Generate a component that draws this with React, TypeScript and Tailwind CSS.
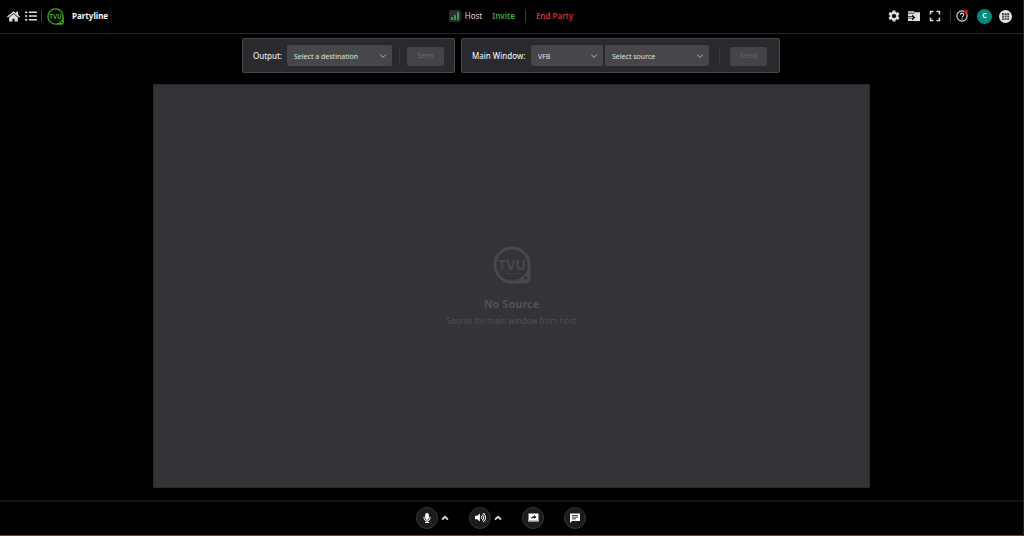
import type { ReactNode } from "react";
import { FaExpand, FaHome, FaListUl, FaMicrophone, FaVolumeUp } from "react-icons/fa";
import { MdSettings } from "react-icons/md";

function TvuLogo({ className, cutout }: { className: string; cutout: string }) {
  return (
    <svg viewBox="0 0 38 38" className={className} role="img" aria-label="TVU networks">
      <path
        d="M19 2a17 17 0 1 0 0 34h14a3 3 0 0 0 3-3V19A17 17 0 0 0 19 2Z"
        fill="none"
        stroke="currentColor"
        strokeWidth="3"
      />
      <path d="M36 19c-1 8-8 15-17 16.500h14a3 3 0 0 0 3-3Z" fill="currentColor" />
      <path d="M31.500 29.500v5l3.500-2.500Z" fill={cutout} />
      <text
        x="19"
        y="24"
        textAnchor="middle"
        fontSize="14"
        fontWeight="700"
        fontFamily="'Open Sans', sans-serif"
        fill="currentColor"
      >
        TVU
      </text>
      <path d="M14 27.500h16" stroke="currentColor" strokeWidth="1.2" strokeDasharray="1.4 .6" opacity=".8" />
    </svg>
  );
}

function Divider({ className }: { className: string }) {
  return <span className={`w-px shrink-0 bg-[#3a3a3e] ${className}`} />;
}

function Dropdown({ label, options, className }: { label: string; options: string[]; className: string }) {
  return (
    <div className={`relative h-[21px] ${className}`}>
      <select
        aria-label={label}
        className="block h-full w-full appearance-none rounded-xs bg-[#46464b] pt-[3px] pr-4 pl-[7px] text-[7px] text-[#e0e0e2]"
      >
        {options.map((option) => (
          <option key={option}>{option}</option>
        ))}
      </select>
      <svg viewBox="0 0 8 8" className="pointer-events-none absolute top-[7px] right-[5px] size-2" fill="none">
        <path d="M1.2 2.6 4 5.4l2.8-2.8" stroke="#b4b4b8" strokeWidth="1" />
      </svg>
    </div>
  );
}

function SendButton() {
  return (
    <button disabled className="mt-[2px] h-[19px] w-[37px] rounded-xs bg-[#434348] text-[7px] text-[#6a6a70]">
      Send
    </button>
  );
}

function RoundButton({ label, children }: { label: string; children: ReactNode }) {
  return (
    <button
      aria-label={label}
      className="flex size-[22px] items-center justify-center rounded-full border border-[#37373a] bg-[#1c1c1d] text-white"
    >
      {children}
    </button>
  );
}

function CaretButton({ label }: { label: string }) {
  return (
    <button aria-label={label} className="text-[#dddddd]">
      <svg viewBox="0 0 8 8" className="size-2" fill="none">
        <path d="M1 5.6 4 2.8l3 2.8" stroke="currentColor" strokeWidth="1.8" />
      </svg>
    </button>
  );
}

function Header() {
  return (
    <header className="grid h-[34px] shrink-0 grid-cols-[1fr_auto_1fr] items-center border-b border-[#29292b] pr-[11px] pb-px pl-[7px]">
      <div className="flex items-center">
        <a href="#home" aria-label="Home" className="text-[#dedee0]">
          <FaHome className="size-[13px]" />
        </a>
        <button aria-label="List" className="ml-[5px] text-[#dedee0]">
          <FaListUl className="size-3" />
        </button>
        <Divider className="ml-1 h-3" />
        <TvuLogo className="ml-[5px] size-[17px] text-[#46a81e]" cutout="#000000" />
        <h1 className="ml-2 text-[8px] font-bold text-white">Partyline</h1>
      </div>

      <div className="flex items-center pl-[3px] text-[8px]">
        <span className="flex size-3 items-center justify-center rounded-xs bg-[#2b2b30]">
          <svg viewBox="0 0 8 8" className="size-2" fill="#2f9e44">
            <path d="M0 5h2v3H0zM3 3h2v5H3zM6 0h2v8H6z" />
          </svg>
        </span>
        <span className="ml-1 text-[#d8d8e0]">Host</span>
        <button className="ml-[10px] font-semibold text-[#3fae4c]">Invite</button>
        <Divider className="ml-[10px] h-3" />
        <button className="ml-[10px] font-semibold text-[#c9343c]">End Party</button>
      </div>

      <div className="flex items-center justify-end text-[#dedee0]">
        <button aria-label="Settings">
          <MdSettings className="size-[14px]" />
        </button>
        <button aria-label="Share folder" className="ml-[7px]">
          <svg viewBox="0 0 12 12" className="size-3">
            <path d="M0 1h6l1 2H0z" fill="#a9a9ac" />
            <path d="M0 3.500h6l1-1.200h5V11H0z" fill="currentColor" />
            <path d="M0 6.200h4V4.400l3.400 3L4 10.400V8.600H0z" fill="#111111" />
            <path d="M0 7h4.800v.8H0z" fill="currentColor" />
          </svg>
        </button>
        <button aria-label="Full screen" className="ml-[9px]">
          <FaExpand className="size-3" />
        </button>
        <Divider className="ml-[9px] h-3" />
        <button aria-label="Help" className="ml-[5px]">
          <svg viewBox="0 0 12 12" className="size-3" fill="none">
            <circle cx="6" cy="6" r="5.1" stroke="currentColor" strokeWidth="1.1" />
            <path d="M4.3 4.8a1.7 1.7 0 1 1 2.5 1.5c-.6.3-.8.6-.8 1.2" stroke="currentColor" strokeWidth="1.1" />
            <circle cx="6" cy="9" r=".7" fill="currentColor" />
            <circle cx="10" cy="2" r="2" fill="#f5090d" />
          </svg>
        </button>
        <button
          aria-label="Account"
          className="ml-[9px] flex size-[15px] items-center justify-center rounded-full bg-[#078b7c] text-[7px] font-bold text-white"
        >
          C
        </button>
        <button aria-label="Apps" className="ml-[7px]">
          <svg viewBox="0 0 13 13" className="size-[13px]">
            <circle cx="6.5" cy="6.5" r="6.5" fill="#e4e4e6" />
            <path
              d="M3 3h1.900v1.900H3zM5.600 3h1.900v1.900H5.600zM8.200 3h1.900v1.900H8.200zM3 5.600h1.900v1.900H3zM5.600 5.600h1.900v1.900H5.600zM8.200 5.600h1.900v1.900H8.200zM3 8.200h1.900v1.900H3zM5.600 8.200h1.900v1.900H5.600zM8.200 8.200h1.900v1.900H8.200z"
              fill="#4b4438"
            />
          </svg>
        </button>
      </div>
    </header>
  );
}

function Toolbar() {
  return (
    <div className="flex justify-center gap-[6px] pt-1 pr-px pb-[11px]">
      <section className="flex h-[35px] items-center rounded-xs border border-[#4a4a4e] bg-[#2a2a2e] px-[10px]">
        <span className="w-[34px] text-[8px] whitespace-nowrap text-white">Output:</span>
        <Dropdown label="Output" options={["Select a destination"]} className="w-[105px]" />
        <Divider className="mx-[7px] h-4" />
        <SendButton />
      </section>
      <section className="flex h-[35px] items-center rounded-xs border border-[#4a4a4e] bg-[#2a2a2e] pr-3 pl-[10px]">
        <span className="w-[59px] text-[8px] whitespace-nowrap text-white">Main Window:</span>
        <Dropdown label="Main window" options={["VFB"]} className="w-[72px]" />
        <Dropdown label="Main window source" options={["Select source"]} className="ml-[2px] w-[104px]" />
        <Divider className="mx-[10px] h-4" />
        <SendButton />
      </section>
    </div>
  );
}

function Footer() {
  return (
    <footer className="flex h-9 shrink-0 items-center justify-center border-t-2 border-b border-t-[#141415] border-b-[#6b4930] pr-[21px] pb-[2px]">
      <RoundButton label="Microphone">
        <FaMicrophone className="size-[10px]" />
      </RoundButton>
      <span className="ml-[3px] flex">
        <CaretButton label="Microphone options" />
      </span>
      <span className="ml-5 flex">
        <RoundButton label="Speaker">
          <FaVolumeUp className="size-[11px]" />
        </RoundButton>
      </span>
      <span className="ml-[3px] flex">
        <CaretButton label="Speaker options" />
      </span>
      <span className="ml-5 flex gap-5">
        <RoundButton label="Share screen">
          <svg viewBox="0 0 11 9" className="h-[9px] w-[11px]">
            <path d="M.5.5h10v7H.5z" fill="currentColor" />
            <path d="M0 7.5h11v1H0z" fill="currentColor" />
            <path d="M3 6c.2-1.8 1.2-2.6 3-2.7V2l2.4 2.1L6 6.1V4.9C4.7 4.9 3.7 5.2 3 6Z" fill="#1c1c1d" />
          </svg>
        </RoundButton>
        <RoundButton label="Chat">
          <svg viewBox="0 0 10 10" className="size-[10px]">
            <path d="M0 .5h10V8H2l-2 2z" fill="currentColor" />
            <path d="M2 2.500h6M2 4.200h6M2 5.900h4" stroke="#1c1c1d" strokeWidth=".8" />
          </svg>
        </RoundButton>
      </span>
    </footer>
  );
}

export default function App() {
  return (
    <div className="flex min-h-screen flex-col border-r border-[#2a241c] bg-black font-['Noto_Sans','Open_Sans',sans-serif]">
      <Header />
      <Toolbar />
      <main className="mx-auto mb-3 flex w-[70%] grow flex-col items-center justify-center border border-[#29292c] bg-[#343338] text-[#48484f]">
        <TvuLogo className="size-[38px]" cutout="#343338" />
        <h2 className="mt-3 text-[11px] leading-4 font-bold text-[#50505a]">No Source</h2>
        <p className="mt-[3px] text-[8px] leading-3 text-[#50505a]">Source for main window from host</p>
      </main>
      <Footer />
    </div>
  );
}
